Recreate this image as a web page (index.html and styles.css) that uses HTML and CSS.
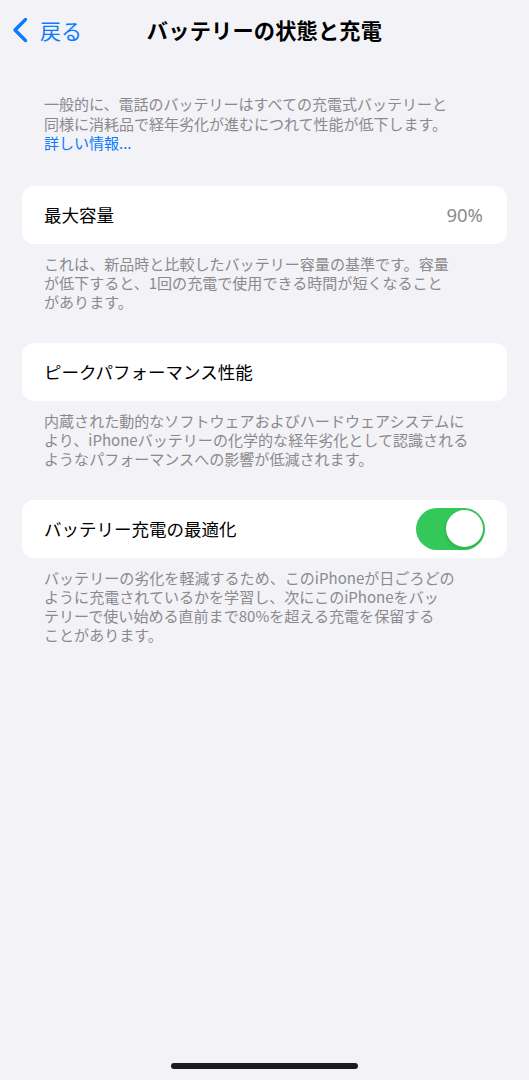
FILE: index.html
```html
<!DOCTYPE html>
<html lang="ja">
<head>
<meta charset="utf-8">
<title>バッテリーの状態と充電</title>
<link rel="stylesheet" href="styles.css">
</head>
<body>
<div class="screen">
  <header class="nav">
    <div class="back">
      <svg class="chev" width="18" height="26" viewBox="0 0 18 26"><path d="M14.5 2.5 L4 13 L14.5 23.5" fill="none" stroke="#0a7aff" stroke-width="3.4" stroke-linecap="round" stroke-linejoin="round"/></svg>
      <span class="back-label">戻る</span>
    </div>
    <h1 class="title">バッテリーの状態と充電</h1>
    <div></div>
  </header>

  <main class="content">
    <p class="intro">一般的に、電話のバッテリーはすべての充電式バッテリーと<br>同様に消耗品で経年劣化が進むにつれて性能が低下します。<br><span class="link">詳しい情報...</span></p>

    <section class="group">
      <div class="card">
        <span class="label">最大容量</span>
        <span class="value">90%</span>
      </div>
      <p class="footnote">これは、新品時と比較したバッテリー容量の基準です。容量<br>が低下すると、1回の充電で使用できる時間が短くなること<br>があります。</p>
    </section>

    <section class="group">
      <div class="card">
        <span class="label">ピークパフォーマンス性能</span>
      </div>
      <p class="footnote">内蔵された動的なソフトウェアおよびハードウェアシステムに<br>より、iPhoneバッテリーの化学的な経年劣化として認識される<br>ようなパフォーマンスへの影響が低減されます。</p>
    </section>

    <section class="group">
      <div class="card">
        <span class="label">バッテリー充電の最適化</span>
        <span class="toggle"><span class="knob"></span></span>
      </div>
      <p class="footnote">バッテリーの劣化を軽減するため、このiPhoneが日ごろどの<br>ように充電されているかを学習し、次にこのiPhoneをバッ<br>テリーで使い始める直前まで80%を超える充電を保留する<br>ことがあります。</p>
    </section>
  </main>

  <div class="home-bar"></div>
</div>
</body>
</html>
```

FILE: styles.css
```css
* { box-sizing: border-box; }
html, body {
  margin: 0;
  padding: 0;
  background: #f2f2f7;
}
body {
  font-family: "Noto Sans CJK JP", "Noto Sans", "Liberation Sans", sans-serif;
  color: #000;
}
.screen {
  width: 529px;
  height: 1080px;
  display: flex;
  flex-direction: column;
}
.nav {
  height: 60px;
  display: grid;
  grid-template-columns: 1fr auto 1fr;
  align-items: center;
}
.back {
  display: flex;
  align-items: center;
  padding-left: 11px;
  gap: 11px;
  color: #0a7aff;
}
.chev { display: block; }
.back-label {
  font-size: 21px;
  line-height: 24px;
}
.title {
  margin: 0;
  font-size: 21.2px;
  font-weight: 700;
  line-height: 26px;
  letter-spacing: 0.2px;
}
.content {
  padding: 0 22px;
  flex: 1;
}
.intro {
  margin: 34px 0 0;
  padding: 0 22px;
  font-size: 15px;
  line-height: 19.5px;
  color: #8a8a8e;
  white-space: nowrap;
}
.link { color: #0a7aff; }
.group { margin-top: 33px; }
.group + .group { margin-top: 32px; }
.card {
  height: 58px;
  background: #fff;
  border-radius: 12px;
  display: flex;
  align-items: center;
  justify-content: space-between;
  padding: 0 22px;
}
.label {
  font-size: 17.5px;
  line-height: 22px;
}
.value {
  font-family: "Noto Sans", "Liberation Sans", sans-serif;
  font-size: 18.5px;
  color: #8a8a8e;
  margin-right: 2px;
}
.toggle {
  width: 69px;
  height: 42px;
  border-radius: 21px;
  background: #34c759;
  display: flex;
  align-items: center;
  justify-content: flex-end;
  padding: 2.5px;
}
.knob {
  width: 37px;
  height: 37px;
  border-radius: 50%;
  background: #fff;
  box-shadow: 0 2px 4px rgba(0,0,0,0.12);
}
.footnote {
  margin: 10px 0 0;
  padding: 0 22px;
  font-size: 15.05px;
  line-height: 19px;
  color: #8a8a8e;
  white-space: nowrap;
}
.home-bar {
  align-self: center;
  width: 187px;
  height: 6px;
  border-radius: 3px;
  background: #1c1c1e;
  margin-bottom: 11px;
}
```
